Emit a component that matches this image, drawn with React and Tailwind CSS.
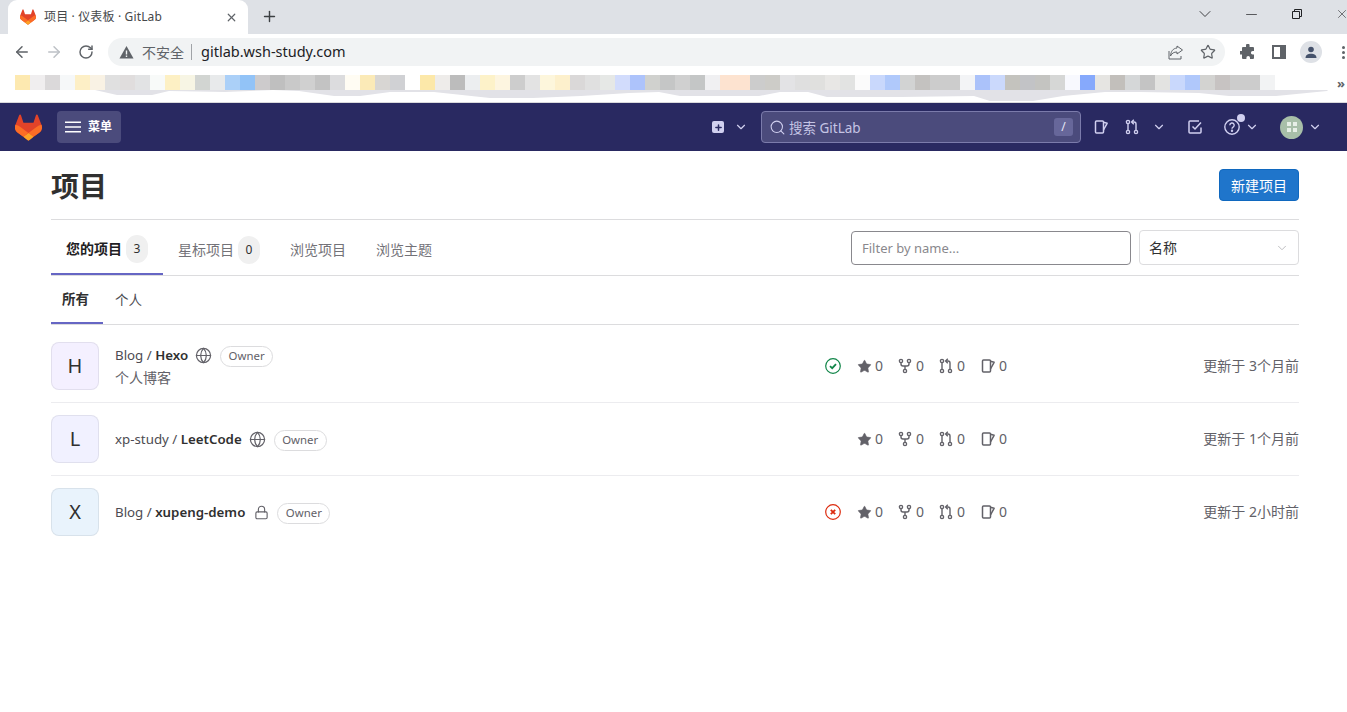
import React from 'react';
import { ArrowLeft, ArrowRight, RotateCw, Star, ChevronDown, Globe, Lock, Search, Plus, X, Minus } from 'lucide-react';

const FONT = '"Noto Sans", "Noto Sans CJK SC", sans-serif';

const BLOCKS = [
    '#fde9b0', '#f0eeef', '#dbd9da', '#f6f8f9', '#fdefc6', '#f9f2e4', '#e0e0e0', '#e0dddd', '#e2e3e4', '#f8faf9',
    '#fdf0c4', '#f7f5e4', '#d2d5d2', '#e8eaeb', '#abd0f8', '#92c3f7', '#cdcbcc', '#bfbfbf', '#c9c9c9', '#d0d0d0',
    '#c3c3c3', '#dcdcde', '#fffcf3', '#fbeab7', '#d8d6d3', '#d0d1d4', '#ffffff', '#fce8a9', '#eeecea', '#bcbcbc',
    '#eceef0', '#fdf2c9', '#fdf5e0', '#cdcdcd', '#e3e3e3', '#fdf6dc', '#fdf0cc', '#dad8d8', '#e0e0e0', '#e6e8e6',
    '#d2dcfc', '#adc3fb', '#d0d1ce', '#c5c6c6', '#d0d0d0', '#c4c6c6', '#f0f0f2', '#fde3d0', '#fde3d0', '#cccccc',
    '#cdccc8', '#e3e3e5', '#dfdfdf', '#e0e0de', '#e8e7e5', '#e2e3e2', '#fbfbfb', '#c9d8fc', '#b0c9fb', '#d2d3d3',
    '#c4c2c0', '#cccccc', '#cccccc', '#f3f4f6', '#abc2fa', '#cbd9fc', '#c4c3be', '#c2c3c6', '#c4c4c1', '#d6d7d6',
    '#f8f9fe', '#86a9fc', '#e6e5e2', '#c2bfbb', '#d5d7d8', '#c4c4c4', '#e3e3e1', '#c9d8fc', '#b0c8fb', '#d3d3d1',
    '#c7c3c2', '#cccccc', '#cccccc', '#f2f3f4',
];

const Tanuki = ({ size }) => (
    <svg width={size} height={size} viewBox="0 0 25 24">
        <path d="m24.507 9.5-.034-.09L21.082.562a.896.896 0 0 0-1.694.091l-2.29 7.01H7.825L5.535.653a.898.898 0 0 0-1.694-.09L.451 9.411.416 9.5a6.297 6.297 0 0 0 2.09 7.278l.012.01.03.022 5.16 3.867 2.56 1.935 1.554 1.176a1.051 1.051 0 0 0 1.268 0l1.555-1.176 2.56-1.935 5.197-3.89.014-.01A6.297 6.297 0 0 0 24.507 9.5Z" fill="#E24329" />
        <path d="m24.507 9.5-.034-.09a11.44 11.44 0 0 0-4.56 2.051l-7.447 5.632 4.742 3.584 5.197-3.89.014-.01A6.297 6.297 0 0 0 24.507 9.5Z" fill="#FC6D26" />
        <path d="m7.707 20.677 2.56 1.935 1.555 1.176a1.051 1.051 0 0 0 1.268 0l1.555-1.176 2.56-1.935-4.743-3.584-4.755 3.584Z" fill="#FCA326" />
        <path d="M5.01 11.461a11.43 11.43 0 0 0-4.56-2.05L.416 9.5a6.297 6.297 0 0 0 2.09 7.278l.012.01.03.022 5.16 3.867 4.745-3.584-7.444-5.632Z" fill="#FC6D26" />
    </svg>
);

// gitlab style 16px icons
const IssueIcon = ({ className }) => (
    <svg width="16" height="16" viewBox="0 0 16 16" fill="none" stroke="currentColor" strokeWidth="1.5" strokeLinejoin="round" className={className}>
        <path d="M3.5 2h6a1 1 0 0 1 1 1v10a1 1 0 0 1-1 1h-6a1 1 0 0 1-1-1V3a1 1 0 0 1 1-1z" />
        <path d="M10.5 3.200l3.600 1.100-3.600 6.700" />
    </svg>
);

const MergeIcon = ({ className }) => (
    <svg width="16" height="16" viewBox="0 0 16 16" fill="none" stroke="currentColor" strokeWidth="1.4" className={className}>
        <circle cx="4" cy="3" r="1.600" />
        <circle cx="4" cy="13" r="1.600" />
        <circle cx="12" cy="13" r="1.600" />
        <path d="M4 4.600v6.800M12 11.400V5a2 2 0 0 0-2-2H8" />
        <path d="M9.800 0.800L7.600 3l2.200 2.200" />
    </svg>
);

const ForkIcon = ({ className }) => (
    <svg width="16" height="16" viewBox="0 0 16 16" fill="none" stroke="currentColor" strokeWidth="1.4" className={className}>
        <circle cx="4" cy="3" r="1.600" />
        <circle cx="12" cy="3" r="1.600" />
        <circle cx="8" cy="13" r="1.600" />
        <path d="M4 4.600V6a2 2 0 0 0 2 2h4a2 2 0 0 0 2-2V4.600M8 8v3.400" />
    </svg>
);

const TodoIcon = ({ className }) => (
    <svg width="16" height="16" viewBox="0 0 16 16" fill="none" stroke="currentColor" strokeWidth="1.5" className={className}>
        <path d="M14 8.500V13a1 1 0 0 1-1 1H3a1 1 0 0 1-1-1V3a1 1 0 0 1 1-1h9" />
        <path d="M5.500 7.500L8 10l6-6.500" />
    </svg>
);

const HelpIcon = ({ className }) => (
    <svg width="16" height="16" viewBox="0 0 16 16" fill="none" stroke="currentColor" strokeWidth="1.4" className={className}>
        <circle cx="8" cy="8" r="7.200" />
        <path d="M5.800 6.200a2.200 2.200 0 1 1 3.300 1.900c-.7.4-1.100.8-1.100 1.600" />
        <circle cx="8" cy="11.800" r=".5" fill="currentColor" />
    </svg>
);

const PipelineStatus = ({ ok }) => (
    <svg width="16" height="16" viewBox="0 0 16 16" fill="none" stroke={ok ? '#108548' : '#dd2b0e'} strokeWidth="1.2">
        <circle cx="8" cy="8" r="7.300" />
        {ok
            ? <path d="M5 8.200l2.200 2 3.800-4" strokeWidth="1.800" />
            : <path d="M5.800 5.800l4.400 4.400M10.200 5.800l-4.400 4.400" strokeWidth="1.800" />}
    </svg>
);

const TabStrip = () => (
    <div className="h-[34px] bg-[#dee1e6] flex relative">
        <div className="ml-[8px] w-[240px] h-[34px] bg-white rounded-t-[9px] flex items-center pl-[12px] pr-[10px]">
            <Tanuki size={16} />
            <span className="ml-[8px] text-[12px] tracking-[0.15px] text-[#45474a] flex-1">项目 · 仪表板 · GitLab</span>
            <X size={13} strokeWidth={2.2} className="text-[#5f6368]" />
        </div>
        <Plus size={17} strokeWidth={2} className="ml-[13px] mt-[8px] text-[#3c4043]" />
        <div className="ml-auto -mr-[2px] flex items-center h-[28px] text-[#202124]">
            <ChevronDown size={20} strokeWidth={1} className="mr-[28px]" />
            <Minus size={17} strokeWidth={1} className="mr-[32px]" />
            <svg width="10" height="10" viewBox="0 0 10 10" fill="none" stroke="currentColor" className="mr-[33px]">
                <path d="M.5 2.500h7v7h-7zM2.500 2.500v-2h7v7h-2" />
            </svg>
            <X size={14} strokeWidth={1} />
        </div>
    </div>
);

const Toolbar = () => (
    <div className="h-[34px] pt-[2px] bg-white flex items-center text-[#5f6368]">
        <ArrowLeft size={18} strokeWidth={2} className="ml-[13px]" />
        <ArrowRight size={18} strokeWidth={2} className="ml-[14px] text-[#bdc1c6]" />
        <RotateCw size={16} strokeWidth={2.2} className="ml-[15px]" />
        <div className="ml-[14px] w-[1117px] h-[28px] bg-[#f1f3f4] rounded-full flex items-center pl-[11px] pr-[9px]">
            <svg width="15" height="14" viewBox="0 0 15 14">
                <path d="M7.500 1L14.500 13.500H.5z" fill="#5f6368" />
                <path d="M6.800 5.500h1.400v4h-1.400zM6.800 10.500h1.400v1.400h-1.400z" fill="#f1f3f4" />
            </svg>
            <span className="ml-[8px] text-[14px] text-[#5f6368]">不安全</span>
            <span className="ml-[7px] w-px h-[16px] bg-[#a0a3a7]" />
            <span className="ml-[9px] text-[14.5px] text-[#202124]">gitlab.wsh-study.com</span>
            <svg width="16" height="16" viewBox="0 0 16 16" fill="none" stroke="currentColor" strokeWidth="1" className="ml-auto">
                <path d="M1 7v8h12v-3M9 2l5.500 4L9 10V8C6 8 4 9 2.500 12 3 7 5 4.500 9 4z" />
            </svg>
            <Star size={16} strokeWidth={1.8} className="ml-[16px]" />
        </div>
        <svg width="16" height="16" viewBox="0 0 16 16" fill="#5f6368" className="ml-[15px]">
            <path d="M6 1.500a1.800 1.800 0 0 1 3.600 0V3h3.400a1 1 0 0 1 1 1v3h-1.300a1.800 1.800 0 0 0 0 3.600H14V14a1 1 0 0 1-1 1H10v-1.300a1.800 1.800 0 0 0-3.600 0V15H3a1 1 0 0 1-1-1v-3.500H.8a1.800 1.800 0 0 1 0-3.600H2V4a1 1 0 0 1 1-1h3z" />
        </svg>
        <div className="ml-[16px] w-[14px] h-[14px] border-[2px] border-[#5f6368] flex justify-end">
            <div className="w-[4px] h-full bg-[#5f6368]" />
        </div>
        <div className="ml-[14px] w-[22px] h-[22px] rounded-full bg-[#dee1e6] flex items-center justify-center">
            <svg width="14" height="14" viewBox="0 0 14 14" fill="#45526b">
                <circle cx="7" cy="4.500" r="2.800" />
                <path d="M1.500 13c0-3 2.500-4.300 5.500-4.300S12.500 10 12.500 13z" />
            </svg>
        </div>
        <div className="ml-[20px] flex flex-col gap-[2px]">
            <span className="w-[3px] h-[3px] rounded-full bg-[#5f6368]" />
            <span className="w-[3px] h-[3px] rounded-full bg-[#5f6368]" />
            <span className="w-[3px] h-[3px] rounded-full bg-[#5f6368]" />
        </div>
    </div>
);

const BookmarkBar = () => (
    <div className="h-[35px] bg-white border-b border-[#d9d9dc] relative">
        <div className="flex pl-[15px] pt-[7px]">
            {BLOCKS.map((color, i) => (
                <div key={i} className="w-[15px] h-[15px] shrink-0" style={{ background: color }} />
            ))}
        </div>
        <svg width="1347" height="34" className="absolute left-0 top-0">
            <polygon fill="#e2e2e7" points="15,22 95,22 117,27 152,27 169,23 225,24 273,22 299,23 334,28 360,28 390,24 434,24 490,30 533,30 581,28 629,25 659,24 680,28 759,28 780,24 808,24 827,29 901,29 974,28 990,33 1033,33 1063,28 1105,24 1140,24 1199,25 1229,28 1276,28 1327,23 1328,22" />
        </svg>
        <span className="absolute right-[2px] top-[6px] text-[13px] leading-[18px] text-[#5f6368] font-bold">»</span>
    </div>
);

const NavBar = () => (
    <nav className="h-[48px] bg-[#292961] flex items-center text-[#d1d0f0]">
        <div className="ml-[15px]"><Tanuki size={27} /></div>
        <div className="ml-[15px] w-[64px] h-[32px] rounded-[4px] bg-[#4b4b7c] flex items-center pl-[8px] text-white">
            <svg width="16" height="12" viewBox="0 0 16 12" fill="none" stroke="currentColor" strokeWidth="1.500">
                <path d="M0 1.200h16M0 6h16M0 10.800h16" />
            </svg>
            <span className="ml-[7px] text-[12px] font-bold">菜单</span>
        </div>
        <div className="ml-[591px] w-[12px] h-[12px] rounded-[2px] bg-[#d1d0f0] flex items-center justify-center">
            <Plus size={9} strokeWidth={4} className="text-[#292961]" />
        </div>
        <ChevronDown size={14} strokeWidth={2} className="ml-[10px]" />
        <div className="ml-[13px] w-[320px] h-[32px] rounded-[4px] bg-[#4b4b7c] border border-[#7b7bab] flex items-center pl-[7px] pr-[7px]">
            <Search size={17} strokeWidth={1.5} />
            <span className="ml-[3px] pt-[2px] text-[13.500px] text-[#c5c4e4]">搜索 GitLab</span>
            <span className="ml-auto w-[19px] h-[18px] rounded-[3px] bg-[#67679a] flex items-center justify-center text-[12px] text-[#e5e5f5]">/</span>
        </div>
        <IssueIcon className="ml-[12px]" />
        <MergeIcon className="ml-[15px]" />
        <ChevronDown size={14} strokeWidth={2} className="ml-[12px]" />
        <TodoIcon className="ml-[21px]" />
        <div className="ml-[21px] relative">
            <HelpIcon />
            <span className="absolute -right-[5px] -top-[5px] w-[8px] h-[8px] rounded-full bg-[#d1d0f0]" />
        </div>
        <ChevronDown size={14} strokeWidth={2} className="ml-[5px]" />
        <div className="ml-[21px] w-[23px] h-[23px] rounded-full bg-[#a8bfa9] grid grid-cols-[4px_4px] gap-[2px] place-content-center">
            <span className="w-[4px] h-[4px] bg-[#e7efe7]" />
            <span className="w-[4px] h-[4px] bg-[#e7efe7]" />
            <span className="w-[4px] h-[4px] bg-[#e7efe7]" />
            <span className="w-[4px] h-[4px] bg-[#e7efe7]" />
        </div>
        <ChevronDown size={14} strokeWidth={2} className="ml-[5px]" />
    </nav>
);

const Tab = ({ label, count, active }) => (
    <div className={`h-[55px] pt-[4px] px-[15px] flex items-center text-[14px] ${active ? 'border-b-2 border-[#6666c4] font-bold text-[#1f1e24]' : 'text-[#737278]'}`}>
        {label}
        {count !== undefined && (
            <span className="ml-[4px] w-[22px] h-[28px] rounded-full bg-[#f0f0f0] flex items-center justify-center text-[12px] font-normal text-[#303030]">{count}</span>
        )}
    </div>
);

const Stat = ({ icon, className }) => (
    <div className={`flex items-center gap-[3px] text-[14px] text-[#626168] ${className}`}>
        <span className="w-[16px] flex justify-center">{icon}</span>
        <span className="mb-[2px]">0</span>
    </div>
);

const ProjectRow = ({ letter, avatarClass, group, name, privacy, desc, status, updated, className }) => (
    <div className={`flex items-center ${className}`}>
        <div className={`w-[48px] h-[48px] rounded-[8px] border border-[#1f1e2414] flex items-center justify-center text-[20px] text-[#303030] ${avatarClass}`}>
            {letter}
        </div>
        <div className="ml-[16px] flex-1">
            <div className="flex items-center text-[13.3px] leading-[22px] text-[#4c4b51]">
                <span>{group} / <span className="font-semibold text-[#303030]">{name}</span></span>
                {privacy === 'public'
                    ? <Globe size={17} strokeWidth={1.7} className="ml-[7px] text-[#626168]" />
                    : <Lock size={15} strokeWidth={1.8} className="ml-[9px] text-[#626168]" />}
                <span className="ml-[8px] mt-[2px] w-[53px] h-[21px] rounded-full border border-[#dcdcde] flex items-center justify-center text-[11.4px] text-[#626168]">Owner</span>
            </div>
            {desc && <div className="text-[14px] leading-[22px] text-[#626168]">{desc}</div>}
        </div>
        <div className="w-[474px] flex items-center">
            <div className="w-[31px] flex">{status !== undefined && <PipelineStatus ok={status} />}</div>
            <Stat className="w-[41px]" icon={<Star size={15} fill="#626168" strokeWidth={1} />} />
            <Stat className="w-[41px]" icon={<ForkIcon />} />
            <Stat className="w-[42px]" icon={<MergeIcon />} />
            <Stat icon={<IssueIcon />} />
            <span className="ml-auto mb-[2px] text-[14px] text-[#626168]">更新于 {updated}</span>
        </div>
    </div>
);

export default function App() {
    return (
        <div className="w-[1347px] h-[712px] overflow-hidden bg-white" style={{ fontFamily: FONT }}>
            <TabStrip />
            <Toolbar />
            <BookmarkBar />
            <NavBar />
            <main className="pl-[51px] pr-[48px]">
                <div className="h-[69px] border-b border-[#dcdcde] flex items-center justify-between">
                    <h1 className="pt-[2px] text-[28px] font-bold text-[#303030]">项目</h1>
                    <button className="w-[80px] h-[32px] rounded-[4px] bg-[#1f75cb] border border-[#1068bf] text-[14px] text-white">新建项目</button>
                </div>
                <div className="h-[56px] border-b border-[#dcdcde] flex items-start">
                    <Tab label="您的项目" count={3} active />
                    <Tab label="星标项目" count={0} />
                    <Tab label="浏览项目" />
                    <Tab label="浏览主题" />
                    <input
                        placeholder="Filter by name..."
                        className="ml-auto mt-[11px] w-[280px] h-[34px] rounded-[4px] border border-[#89888d] px-[10px] text-[13px] placeholder:text-[#89888d]"
                    />
                    <div className="ml-[8px] mt-[10px] w-[160px] h-[35px] rounded-[4px] border border-[#dcdcde] flex items-center justify-between pl-[9px] pr-[9px] text-[14px] text-[#303030]">
                        名称
                        <ChevronDown size={14} strokeWidth={1.5} className="text-[#b5b5b8]" />
                    </div>
                </div>
                <div className="h-[49px] border-b border-[#dcdcde] flex text-[13.5px]">
                    <div className="w-[52px] h-[48px] pt-[1px] pl-[11px] flex items-center border-b-2 border-[#6666c4] font-bold text-[#303030]">所有</div>
                    <div className="ml-[12px] h-[48px] flex items-center text-[#4c4b51]">个人</div>
                </div>
                <ProjectRow
                    className="pt-[17px] pb-[12px] border-b border-[#ececef]"
                    letter="H"
                    avatarClass="bg-[#f4f0ff]"
                    group="Blog"
                    name="Hexo"
                    privacy="public"
                    desc="个人博客"
                    status={true}
                    updated="3个月前"
                />
                <ProjectRow
                    className="py-[12px] border-b border-[#ececef]"
                    letter="L"
                    avatarClass="bg-[#f1f1ff]"
                    group="xp-study"
                    name="LeetCode"
                    privacy="public"
                    updated="1个月前"
                />
                <ProjectRow
                    className="py-[12px]"
                    letter="X"
                    avatarClass="bg-[#e9f3fc]"
                    group="Blog"
                    name="xupeng-demo"
                    privacy="private"
                    status={false}
                    updated="2小时前"
                />
            </main>
        </div>
    );
}
